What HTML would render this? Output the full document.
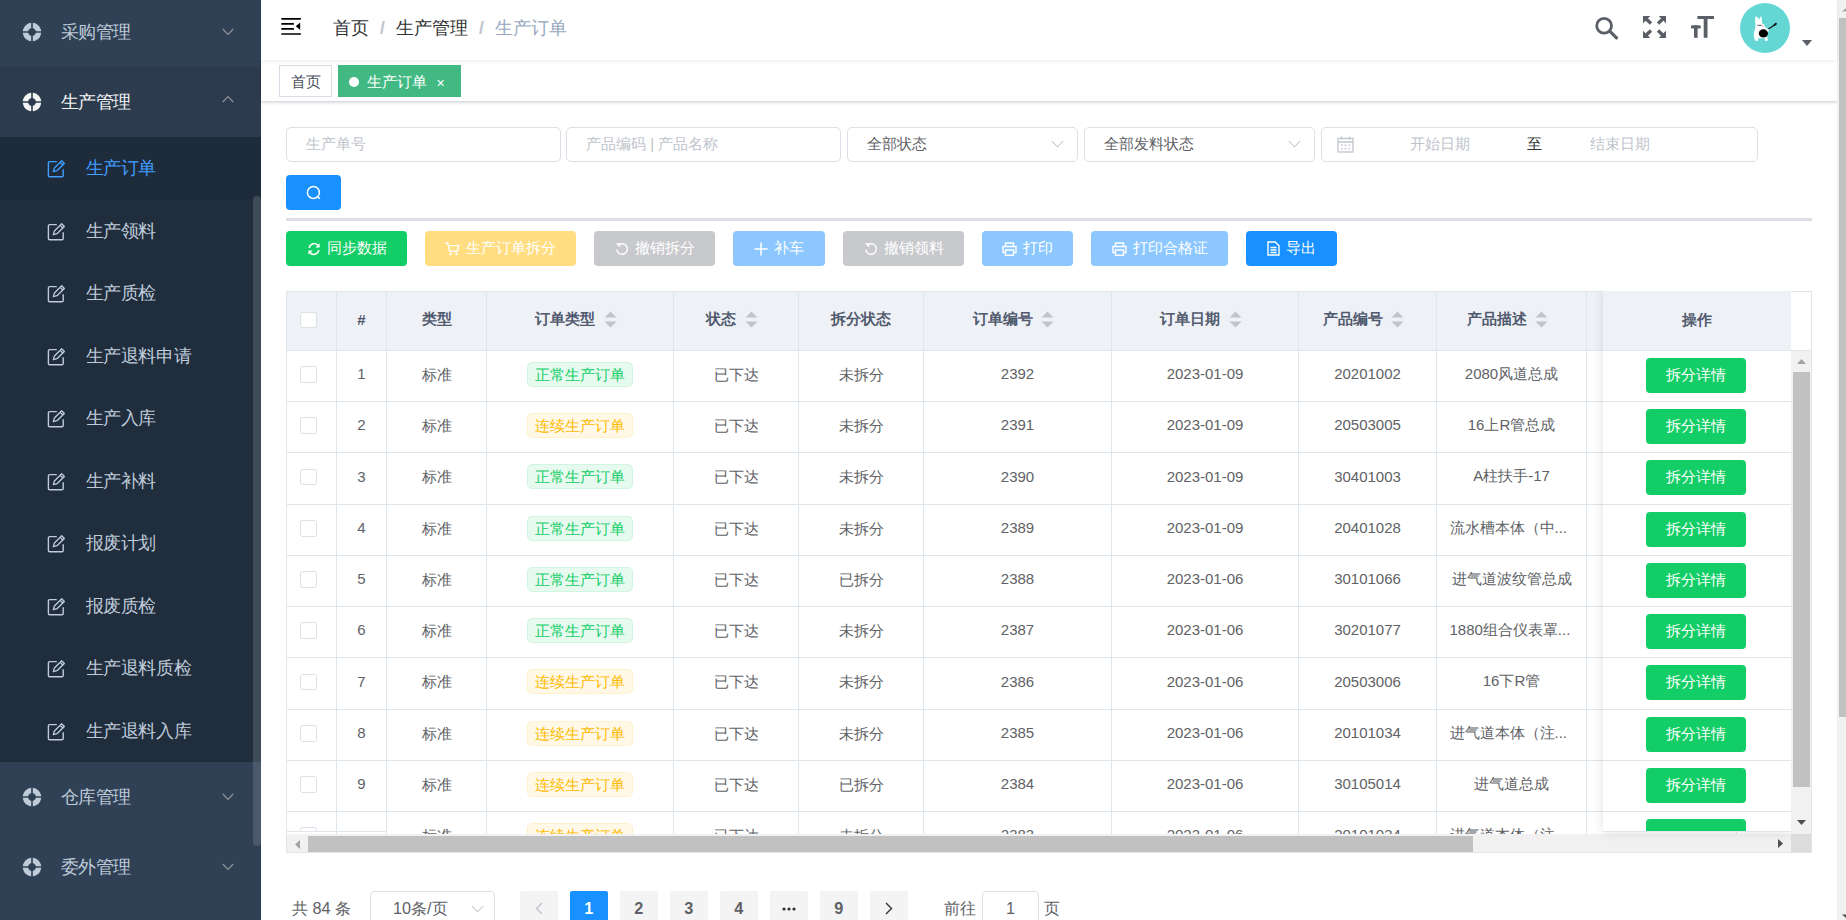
<!DOCTYPE html><html><head><meta charset="utf-8"><style>*{box-sizing:border-box;margin:0;padding:0}
html,body{width:1846px;height:920px;overflow:hidden;background:#fff;font-family:"Liberation Sans",sans-serif;position:relative}
#side{position:absolute;left:0;top:0;width:261px;height:920px;background:#304156;overflow:hidden}
.mh{position:absolute;left:0;width:261px;height:70px;color:#bfcbd9;font-size:17.5px}
.mh.act{color:#f4f4f5}
.mh .ri{position:absolute;left:22px;top:25px}
.mh .mt{position:absolute;left:60.5px;top:0;line-height:70px;letter-spacing:-0.4px}
.mh .arr{position:absolute;left:222px;top:31px;color:#909399}
.mh.act .arr{top:28px}
.sub{position:absolute;left:0;width:261px;background:#1f2d3d}
.mi{position:absolute;left:0;width:261px;height:62.5px;color:#bfcbd9;font-size:17.5px}
.mi.on{color:#409eff}
.mi .ei{position:absolute;left:47px;top:23px}
.mi .mt{position:absolute;left:85.5px;top:0;line-height:62.5px;letter-spacing:-0.4px}
.sb-thumb{position:absolute;left:253px;top:196px;width:8px;height:650px;background:rgba(144,147,153,.3);border-radius:4px}
#nav{position:absolute;left:261px;top:0;width:1576px;height:60px;background:#fff;box-shadow:0 1px 4px rgba(0,21,41,.08);z-index:2}
.ham{position:absolute;left:20px;top:17px}
.bc{position:absolute;left:72px;top:0;line-height:56px;font-size:17.5px;white-space:nowrap}
.bc .b1{color:#303133}
.bc .b2{color:#97a8be}
.bc .sep{color:#c0c4cc;margin:0 11px;font-weight:bold}
.ic{position:absolute;z-index:3}
.avatar{position:absolute;left:1740px;top:3px;width:50px;height:50px;z-index:3}
.caret{position:absolute;left:1802px;top:40px;z-index:3}
#tags{position:absolute;left:261px;top:60px;width:1576px;height:42px;background:#fff;border-bottom:1px solid #d8dce5;box-shadow:0 1px 3px 0 rgba(0,0,0,.12),0 0 3px 0 rgba(0,0,0,.04)}
.tag{position:absolute;top:5px;height:32px;line-height:31.5px;font-size:15px;border:1px solid #d8dce5;color:#495060;padding:0 10px}
.t0{left:18px;width:53px;text-align:center;padding:0}
.t1{left:77px;width:123px;background:#42b983;border-color:#42b983;color:#fff;padding-left:28px}
.t1 .dot{position:absolute;left:10px;top:11px;width:10px;height:10px;border-radius:50%;background:#fff}
.t1 .x{position:absolute;left:97.5px;top:1.5px;font-size:14px}
.inp{position:absolute;top:127px;height:35px;border:1px solid #dcdfe6;border-radius:5px;font-size:15px;line-height:32px;padding-left:19px;white-space:nowrap}
.ph{color:#c0c4cc}
.val{color:#606266}
.chev{position:absolute;right:13.5px;top:11.5px}
.btn{position:absolute;border-radius:4px;color:#fff;font-size:15px;display:flex;align-items:center;justify-content:center}
.sbtn{left:286px;top:175px;width:55px;height:35px;background:#1890ff}
.divider{position:absolute;left:286px;top:218px;width:1526px;height:3px;background:#dcdfe6}
.abtn{top:231px;height:35px}
.abtn svg{margin-right:6px}
#tbl{position:absolute;left:0;top:0}
.thead{position:absolute;left:286px;width:1505px;background:#eef1f6;border-bottom:1px solid #dfe6ec}
.th{position:absolute;display:flex;align-items:center;justify-content:center;font-size:15px;font-weight:bold;color:#515a6e}
.th .sort{margin-left:8.5px;margin-right:8.5px;position:relative;top:-1.2px}
.th span{position:relative;top:-1.2px}
.td{position:absolute;display:flex;align-items:center;justify-content:center;font-size:15px;color:#606266;white-space:nowrap}
.td span{position:relative}
.kd span{top:-2.5px}.kc span{top:-1px}.km span{top:-2px}
.vl{position:absolute;width:1px;background:#dfe6ec}
.hl{position:absolute;left:286px;width:1505px;height:1px;background:#dfe6ec}
.cb{position:absolute;width:16.5px;height:16.5px;border:1px solid #dcdfe6;border-radius:2.5px;background:#fff}
.tag2{display:inline-block;height:25px;line-height:23px;padding:0 7px;border-radius:5px;border:1px solid;font-size:15px;position:relative;top:-2px}
.tag2.g{background:#e7faf0;border-color:#d0f5e0;color:#13ce66}
.tag2.o{background:#fff8e6;border-color:#fff1cc;color:#ffba00}
#pscroll{position:absolute;left:1837px;top:0;width:19px;height:920px;background:#f1f1f1;overflow:hidden}
.pthumb{position:absolute;left:2px;top:18px;width:15px;height:699px;background:#c1c1c1}
.clip{position:absolute;left:0;top:0;width:1846px;height:920px}
.fixr{position:absolute;left:1603px;top:291px;width:188px;height:541px;border-bottom:1px solid #dfe6ec;background:#fff;box-shadow:0 0 10px rgba(0,0,0,.12);overflow:hidden}
.fixr-h{position:absolute;left:0;top:0;width:188px;height:60px;background:#eef1f6;border-bottom:1px solid #dfe6ec;display:flex;align-items:center;justify-content:center;font-size:15px;font-weight:bold;color:#515a6e}
.fr-row{position:absolute;left:0;width:188px;border-bottom:1px solid #dfe6ec;display:flex;align-items:center;justify-content:center}
.gbtn{position:relative;left:-1px;top:-1px;width:100px;height:35px;border-radius:4px;background:#13ce66;color:#fff;font-size:15px;display:flex;align-items:center;justify-content:center}
.gutter-h{position:absolute;left:1790px;top:291px;width:22px;height:60px;background:#fff;border-bottom:1px solid #dfe6ec;border-left:1px solid #dfe6ec}
.vsb{position:absolute;left:1791px;top:350.5px;width:20px;height:483.5px;background:#f1f1f1}
.vsb .ua{position:absolute;left:5.5px;top:8px}
.vsb .da{position:absolute;left:5.5px;top:469px}
.vthumb{position:absolute;left:2px;top:21.5px;width:17px;height:415px;background:#c1c1c1}
.hsb{position:absolute;left:287px;top:834px;width:1504px;height:18px;background:#f1f1f1}
.hsb .la{position:absolute;left:8px;top:5.5px}
.hsb .ra{position:absolute;left:1491px;top:4.5px}
.hthumb{position:absolute;left:21px;top:2px;width:1165px;height:16px;background:#c1c1c1}
.corner{position:absolute;left:1791px;top:834px;width:20px;height:18px;background:#dcdcdc}
.ptot{position:absolute;left:292px;top:891px;line-height:35px;font-size:16.25px;color:#606266}
.psize{position:absolute;left:370px;top:891px;width:124.5px;height:35px;border:1px solid #dcdfe6;border-radius:4px;font-size:16.25px;line-height:33px;padding-left:22px;color:#606266}
.psize .chev{position:absolute;right:10px;top:13px}
.pb{position:absolute;top:891px;width:37.5px;height:35px;background:#f4f4f5;border-radius:2px;font-size:16.25px;font-weight:bold;color:#606266;display:flex;align-items:center;justify-content:center}
.pb.pact{background:#1890ff;color:#fff}
.pgo,.ppage{position:absolute;top:891px;line-height:35px;font-size:16.25px;color:#606266}
.pgo{left:943.5px}
.ppage{left:1043.5px}
.pinp{position:absolute;left:982px;top:891px;width:57px;height:35px;border:1px solid #dcdfe6;border-radius:4px;text-align:center;line-height:33px;font-size:16.25px;color:#606266}
.td.ell{justify-content:flex-start;padding-left:12.5px}
</style></head><body>
<div id="side"><div class="mh " style="top:-3px;background:#304156"><svg class="ri" width="20" height="20" viewBox="0 0 20 20"><path fill-rule="evenodd" d="M10 0.75a9.25 9.25 0 1 0 0.001 0zM10 6.1a3.9 3.9 0 1 1-0.001 0z" fill="currentColor"/><path d="M10 0v20M0 10h20" stroke="#304156" stroke-width="1.6"/></svg><span class="mt">采购管理</span><svg class="arr" width="12" height="8" viewBox="0 0 12 8"><path d="M0.8 1L6 6.4 11.2 1" fill="none" stroke="currentColor" stroke-width="1.2"/></svg></div><div class="mh act" style="top:67px;background:#2c3b4d"><svg class="ri" width="20" height="20" viewBox="0 0 20 20"><path fill-rule="evenodd" d="M10 0.75a9.25 9.25 0 1 0 0.001 0zM10 6.1a3.9 3.9 0 1 1-0.001 0z" fill="currentColor"/><path d="M10 0v20M0 10h20" stroke="#2c3b4d" stroke-width="1.6"/></svg><span class="mt">生产管理</span><svg class="arr" width="12" height="8" viewBox="0 0 12 8"><path d="M0.8 7L6 1.6 11.2 7" fill="none" stroke="currentColor" stroke-width="1.2"/></svg></div><div class="sub" style="top:137px;height:625px"></div><div class="mi on" style="top:137.0px;background:#1e2b3b"><svg class="ei" width="20" height="19" viewBox="0 0 20 19"><path d="M9.8 1.6H2.6a1.2 1.2 0 0 0-1.2 1.2V15.5a1.2 1.2 0 0 0 1.2 1.2H15a1.2 1.2 0 0 0 1.2-1.2V9.2" fill="none" stroke="currentColor" stroke-width="1.4"/><path d="M6.3 11.6l1.1-3.5 7.3-7.3 2.6 2.6-7.3 7.3z M13.2 2.3l2.6 2.6" fill="none" stroke="currentColor" stroke-width="1.35" stroke-linejoin="round"/></svg><span class="mt">生产订单</span></div><div class="mi" style="top:199.5px;"><svg class="ei" width="20" height="19" viewBox="0 0 20 19"><path d="M9.8 1.6H2.6a1.2 1.2 0 0 0-1.2 1.2V15.5a1.2 1.2 0 0 0 1.2 1.2H15a1.2 1.2 0 0 0 1.2-1.2V9.2" fill="none" stroke="currentColor" stroke-width="1.4"/><path d="M6.3 11.6l1.1-3.5 7.3-7.3 2.6 2.6-7.3 7.3z M13.2 2.3l2.6 2.6" fill="none" stroke="currentColor" stroke-width="1.35" stroke-linejoin="round"/></svg><span class="mt">生产领料</span></div><div class="mi" style="top:262.0px;"><svg class="ei" width="20" height="19" viewBox="0 0 20 19"><path d="M9.8 1.6H2.6a1.2 1.2 0 0 0-1.2 1.2V15.5a1.2 1.2 0 0 0 1.2 1.2H15a1.2 1.2 0 0 0 1.2-1.2V9.2" fill="none" stroke="currentColor" stroke-width="1.4"/><path d="M6.3 11.6l1.1-3.5 7.3-7.3 2.6 2.6-7.3 7.3z M13.2 2.3l2.6 2.6" fill="none" stroke="currentColor" stroke-width="1.35" stroke-linejoin="round"/></svg><span class="mt">生产质检</span></div><div class="mi" style="top:324.5px;"><svg class="ei" width="20" height="19" viewBox="0 0 20 19"><path d="M9.8 1.6H2.6a1.2 1.2 0 0 0-1.2 1.2V15.5a1.2 1.2 0 0 0 1.2 1.2H15a1.2 1.2 0 0 0 1.2-1.2V9.2" fill="none" stroke="currentColor" stroke-width="1.4"/><path d="M6.3 11.6l1.1-3.5 7.3-7.3 2.6 2.6-7.3 7.3z M13.2 2.3l2.6 2.6" fill="none" stroke="currentColor" stroke-width="1.35" stroke-linejoin="round"/></svg><span class="mt">生产退料申请</span></div><div class="mi" style="top:387.0px;"><svg class="ei" width="20" height="19" viewBox="0 0 20 19"><path d="M9.8 1.6H2.6a1.2 1.2 0 0 0-1.2 1.2V15.5a1.2 1.2 0 0 0 1.2 1.2H15a1.2 1.2 0 0 0 1.2-1.2V9.2" fill="none" stroke="currentColor" stroke-width="1.4"/><path d="M6.3 11.6l1.1-3.5 7.3-7.3 2.6 2.6-7.3 7.3z M13.2 2.3l2.6 2.6" fill="none" stroke="currentColor" stroke-width="1.35" stroke-linejoin="round"/></svg><span class="mt">生产入库</span></div><div class="mi" style="top:449.5px;"><svg class="ei" width="20" height="19" viewBox="0 0 20 19"><path d="M9.8 1.6H2.6a1.2 1.2 0 0 0-1.2 1.2V15.5a1.2 1.2 0 0 0 1.2 1.2H15a1.2 1.2 0 0 0 1.2-1.2V9.2" fill="none" stroke="currentColor" stroke-width="1.4"/><path d="M6.3 11.6l1.1-3.5 7.3-7.3 2.6 2.6-7.3 7.3z M13.2 2.3l2.6 2.6" fill="none" stroke="currentColor" stroke-width="1.35" stroke-linejoin="round"/></svg><span class="mt">生产补料</span></div><div class="mi" style="top:512.0px;"><svg class="ei" width="20" height="19" viewBox="0 0 20 19"><path d="M9.8 1.6H2.6a1.2 1.2 0 0 0-1.2 1.2V15.5a1.2 1.2 0 0 0 1.2 1.2H15a1.2 1.2 0 0 0 1.2-1.2V9.2" fill="none" stroke="currentColor" stroke-width="1.4"/><path d="M6.3 11.6l1.1-3.5 7.3-7.3 2.6 2.6-7.3 7.3z M13.2 2.3l2.6 2.6" fill="none" stroke="currentColor" stroke-width="1.35" stroke-linejoin="round"/></svg><span class="mt">报废计划</span></div><div class="mi" style="top:574.5px;"><svg class="ei" width="20" height="19" viewBox="0 0 20 19"><path d="M9.8 1.6H2.6a1.2 1.2 0 0 0-1.2 1.2V15.5a1.2 1.2 0 0 0 1.2 1.2H15a1.2 1.2 0 0 0 1.2-1.2V9.2" fill="none" stroke="currentColor" stroke-width="1.4"/><path d="M6.3 11.6l1.1-3.5 7.3-7.3 2.6 2.6-7.3 7.3z M13.2 2.3l2.6 2.6" fill="none" stroke="currentColor" stroke-width="1.35" stroke-linejoin="round"/></svg><span class="mt">报废质检</span></div><div class="mi" style="top:637.0px;"><svg class="ei" width="20" height="19" viewBox="0 0 20 19"><path d="M9.8 1.6H2.6a1.2 1.2 0 0 0-1.2 1.2V15.5a1.2 1.2 0 0 0 1.2 1.2H15a1.2 1.2 0 0 0 1.2-1.2V9.2" fill="none" stroke="currentColor" stroke-width="1.4"/><path d="M6.3 11.6l1.1-3.5 7.3-7.3 2.6 2.6-7.3 7.3z M13.2 2.3l2.6 2.6" fill="none" stroke="currentColor" stroke-width="1.35" stroke-linejoin="round"/></svg><span class="mt">生产退料质检</span></div><div class="mi" style="top:699.5px;"><svg class="ei" width="20" height="19" viewBox="0 0 20 19"><path d="M9.8 1.6H2.6a1.2 1.2 0 0 0-1.2 1.2V15.5a1.2 1.2 0 0 0 1.2 1.2H15a1.2 1.2 0 0 0 1.2-1.2V9.2" fill="none" stroke="currentColor" stroke-width="1.4"/><path d="M6.3 11.6l1.1-3.5 7.3-7.3 2.6 2.6-7.3 7.3z M13.2 2.3l2.6 2.6" fill="none" stroke="currentColor" stroke-width="1.35" stroke-linejoin="round"/></svg><span class="mt">生产退料入库</span></div><div class="mh " style="top:762px;background:#304156"><svg class="ri" width="20" height="20" viewBox="0 0 20 20"><path fill-rule="evenodd" d="M10 0.75a9.25 9.25 0 1 0 0.001 0zM10 6.1a3.9 3.9 0 1 1-0.001 0z" fill="currentColor"/><path d="M10 0v20M0 10h20" stroke="#304156" stroke-width="1.6"/></svg><span class="mt">仓库管理</span><svg class="arr" width="12" height="8" viewBox="0 0 12 8"><path d="M0.8 1L6 6.4 11.2 1" fill="none" stroke="currentColor" stroke-width="1.2"/></svg></div><div class="mh " style="top:832px;background:#304156"><svg class="ri" width="20" height="20" viewBox="0 0 20 20"><path fill-rule="evenodd" d="M10 0.75a9.25 9.25 0 1 0 0.001 0zM10 6.1a3.9 3.9 0 1 1-0.001 0z" fill="currentColor"/><path d="M10 0v20M0 10h20" stroke="#304156" stroke-width="1.6"/></svg><span class="mt">委外管理</span><svg class="arr" width="12" height="8" viewBox="0 0 12 8"><path d="M0.8 1L6 6.4 11.2 1" fill="none" stroke="currentColor" stroke-width="1.2"/></svg></div><div class="sb-thumb"></div></div>
<div id="nav"><svg class="ham" width="22" height="19" viewBox="0 0 22 19"><path d="M1 1.8h18.2M1 6.9h11.2M1 11.9h11.2M1 17h18.2" stroke="#000" stroke-width="1.7" stroke-linecap="round"/><path d="M19.2 5.6v7.4l-4.4-3.7z" fill="#000"/></svg><div class="bc"><span class="b1">首页</span><span class="sep">/</span><span class="b1">生产管理</span><span class="sep">/</span><span class="b2">生产订单</span></div></div><svg class="ic" style="left:1595px;top:16px" width="24" height="24" viewBox="0 0 24 24"><circle cx="9.1" cy="9.8" r="7.4" fill="none" stroke="#5a5e66" stroke-width="2.8"/><path d="M15 15.4l6.5 6.4" stroke="#5a5e66" stroke-width="3.2" stroke-linecap="round"/></svg><svg class="ic" style="left:1643px;top:16px" width="23" height="22" viewBox="0 0 23 22"><g fill="#5a5e66"><path d="M0 0h7.3L0 7.2z M23 0h-7.3L23 7.2z M0 22h7.3L0 14.8z M23 22h-7.3L23 14.8z"/></g><g stroke="#5a5e66" stroke-width="3.4"><path d="M2.2 2.1L8 7.4 M20.8 2.1L15 7.4 M2.2 19.9L8 14.6 M20.8 19.9L15 14.6"/></g></svg><svg class="ic" style="left:1690px;top:16px" width="25" height="23" viewBox="0 0 25 23"><g fill="#5a5e66"><rect x="7.4" y="0" width="16.6" height="3" rx="0.3"/><rect x="13.7" y="0" width="3.8" height="21.8"/><rect x="1" y="9.4" width="9.7" height="3"/><rect x="4" y="9.4" width="3.6" height="12.4"/></g></svg><div class="avatar"><svg width="50" height="50" viewBox="0 0 50 50"><circle cx="25" cy="25" r="25" fill="#64d7d5"/>
<path d="M15.6 13.4C15 16 14.9 19 15.5 21L15.2 25.5C14 28 13.6 31 13.9 33.5L14.9 37.6 18 37.9 18.3 35.2 24.6 35.2 25.1 37.9 28 37.6 27 33C28.2 30.5 28.6 28 28.2 26.3L25 24C25 22.3 24 21 22.2 20.6C21.8 18 22 15 21.2 13.2 20.2 13.6 19.6 15 19.3 17 18.6 15 17.4 13.6 15.6 13.4Z" fill="#fff"/>
<path d="M17.6 22.3h4" stroke="#222" stroke-width="0.8"/><circle cx="23" cy="23" r="0.9" fill="#f4b6c2"/>
<ellipse cx="23.4" cy="30.4" rx="4.6" ry="4.2" fill="#000"/>
<path d="M25.5 28L35.6 21.2" stroke="#111" stroke-width="1.2"/><path d="M34 22.3l2.6-2" stroke="#111" stroke-width="2"/>
<circle cx="27.6" cy="27" r="1.3" fill="#fff"/></svg></div>
<svg class="caret" width="10" height="6" viewBox="0 0 10 6"><path d="M0 0h10L5 6z" fill="#5a5e66"/></svg><div id="tags"><div class="tag t0">首页</div><div class="tag t1"><span class="dot"></span>生产订单<span class="x">×</span></div></div>
<div class="inp" style="left:286px;width:275px"><span class="ph">生产单号</span></div><div class="inp" style="left:566px;width:275px"><span class="ph">产品编码 | 产品名称</span></div><div class="inp" style="left:847px;width:231px"><span class="val">全部状态</span><svg class="chev" width="13" height="8" viewBox="0 0 13 8"><path d="M0.8 1L6.5 6.8 12.2 1" fill="none" stroke="#c0c4cc" stroke-width="1.05"/></svg></div><div class="inp" style="left:1084px;width:231px"><span class="val">全部发料状态</span><svg class="chev" width="13" height="8" viewBox="0 0 13 8"><path d="M0.8 1L6.5 6.8 12.2 1" fill="none" stroke="#c0c4cc" stroke-width="1.05"/></svg></div><div class="inp" style="left:1321px;width:437px"><svg style="position:absolute;left:15px;top:8px" width="17" height="17" viewBox="0 0 17 17"><g fill="none" stroke="#c0c4cc" stroke-width="1.3"><rect x="1" y="2.5" width="15" height="13.5"/><path d="M1 6h15M4.5 0.5v3M12.5 0.5v3"/></g><g fill="#c0c4cc"><rect x="4" y="8.5" width="1.6" height="1.4"/><rect x="7.7" y="8.5" width="1.6" height="1.4"/><rect x="11.4" y="8.5" width="1.6" height="1.4"/><rect x="4" y="12" width="1.6" height="1.4"/><rect x="7.7" y="12" width="1.6" height="1.4"/><rect x="11.4" y="12" width="1.6" height="1.4"/></g></svg><span class="ph" style="position:absolute;left:88px">开始日期</span><span style="position:absolute;left:205px;color:#303133">至</span><span class="ph" style="position:absolute;left:268px">结束日期</span></div><div class="btn sbtn"><svg width="16" height="16" viewBox="0 0 16 16"><circle cx="7.4" cy="7.4" r="6" fill="none" stroke="#fff" stroke-width="1.5"/><path d="M11.8 11.8l2 2" stroke="#fff" stroke-width="1.5"/></svg></div><div class="divider"></div>
<div class="btn abtn" style="left:286px;width:121px;background:#13ce66"><svg width="14" height="14" viewBox="0 0 14 14"><g fill="none" stroke="#fff" stroke-width="1.5"><path d="M2.2 6A5 5 0 0 1 11.4 4"/><path d="M11.8 8A5 5 0 0 1 2.6 10"/></g><path d="M12.6 1.2v4.2H8.4z M1.4 12.8V8.6h4.2z" fill="#fff"/></svg><span>同步数据</span></div><div class="btn abtn" style="left:425px;width:151px;background:#ffdd80"><svg width="15" height="14" viewBox="0 0 15 14"><g fill="none" stroke="#fff" stroke-width="1.4"><path d="M0.5 1h2.2l2 8.2h7.6l1.6-5.6H3.6"/></g><circle cx="5.6" cy="12" r="1.2" fill="#fff"/><circle cx="11.4" cy="12" r="1.2" fill="#fff"/></svg><span>生产订单拆分</span></div><div class="btn abtn" style="left:594px;width:121px;background:#c8c9cc"><svg width="14" height="14" viewBox="0 0 14 14"><path d="M3.2 3.4A5.3 5.3 0 1 1 1.8 7.6" fill="none" stroke="#fff" stroke-width="1.4"/><path d="M0.8 1.2h4.4v4.2z" fill="#fff"/></svg><span>撤销拆分</span></div><div class="btn abtn" style="left:733px;width:92px;background:#8cc8ff"><svg width="14" height="14" viewBox="0 0 14 14"><path d="M7 0.5v13M0.5 7h13" stroke="#fff" stroke-width="1.5"/></svg><span>补车</span></div><div class="btn abtn" style="left:843px;width:121px;background:#c8c9cc"><svg width="14" height="14" viewBox="0 0 14 14"><path d="M3.2 3.4A5.3 5.3 0 1 1 1.8 7.6" fill="none" stroke="#fff" stroke-width="1.4"/><path d="M0.8 1.2h4.4v4.2z" fill="#fff"/></svg><span>撤销领料</span></div><div class="btn abtn" style="left:982px;width:91px;background:#8cc8ff"><svg width="15" height="14" viewBox="0 0 15 14"><g fill="none" stroke="#fff" stroke-width="1.4"><path d="M3.5 4.5V1h8v3.5"/><path d="M3.5 10.5H1V4.5h13v6h-2.5"/><path d="M3.5 8h8v5.2h-8z"/></g></svg><span>打印</span></div><div class="btn abtn" style="left:1091px;width:137px;background:#8cc8ff"><svg width="15" height="14" viewBox="0 0 15 14"><g fill="none" stroke="#fff" stroke-width="1.4"><path d="M3.5 4.5V1h8v3.5"/><path d="M3.5 10.5H1V4.5h13v6h-2.5"/><path d="M3.5 8h8v5.2h-8z"/></g></svg><span>打印合格证</span></div><div class="btn abtn" style="left:1246px;width:91px;background:#1890ff"><svg width="13" height="15" viewBox="0 0 13 15"><g fill="none" stroke="#fff" stroke-width="1.4"><path d="M1 1h7.2l3.8 3.8V14H1z"/><path d="M3.5 6.5h6M3.5 9h6M3.5 11.5h6"/></g></svg><span>导出</span></div>
<div class="clip" style="clip-path:inset(291px 56px 569px 286px)"><div class="thead" style="top:291px;height:60px"></div><div class="cb" style="left:300.25px;top:311.5px"></div><div class="vl" style="left:336px;top:291px;height:60px"></div><div class="th" style="left:337px;width:49px;top:291px;height:59px"><span>#</span></div><div class="vl" style="left:386px;top:291px;height:60px"></div><div class="th" style="left:387px;width:99px;top:291px;height:59px"><span>类型</span></div><div class="vl" style="left:486px;top:291px;height:60px"></div><div class="th" style="left:487px;width:186px;top:291px;height:59px"><span>订单类型</span><svg class="sort" width="13" height="17" viewBox="0 0 13 17"><path d="M6.5 0.5L12.5 6.5H0.5z M6.5 16.5L12.5 10.5H0.5z" fill="#c0c4cc"/></svg></div><div class="vl" style="left:673px;top:291px;height:60px"></div><div class="th" style="left:674px;width:124px;top:291px;height:59px"><span>状态</span><svg class="sort" width="13" height="17" viewBox="0 0 13 17"><path d="M6.5 0.5L12.5 6.5H0.5z M6.5 16.5L12.5 10.5H0.5z" fill="#c0c4cc"/></svg></div><div class="vl" style="left:798px;top:291px;height:60px"></div><div class="th" style="left:799px;width:124px;top:291px;height:59px"><span>拆分状态</span></div><div class="vl" style="left:923px;top:291px;height:60px"></div><div class="th" style="left:924px;width:187px;top:291px;height:59px"><span>订单编号</span><svg class="sort" width="13" height="17" viewBox="0 0 13 17"><path d="M6.5 0.5L12.5 6.5H0.5z M6.5 16.5L12.5 10.5H0.5z" fill="#c0c4cc"/></svg></div><div class="vl" style="left:1111px;top:291px;height:60px"></div><div class="th" style="left:1112px;width:186px;top:291px;height:59px"><span>订单日期</span><svg class="sort" width="13" height="17" viewBox="0 0 13 17"><path d="M6.5 0.5L12.5 6.5H0.5z M6.5 16.5L12.5 10.5H0.5z" fill="#c0c4cc"/></svg></div><div class="vl" style="left:1298px;top:291px;height:60px"></div><div class="th" style="left:1299px;width:137px;top:291px;height:59px"><span>产品编号</span><svg class="sort" width="13" height="17" viewBox="0 0 13 17"><path d="M6.5 0.5L12.5 6.5H0.5z M6.5 16.5L12.5 10.5H0.5z" fill="#c0c4cc"/></svg></div><div class="vl" style="left:1436px;top:291px;height:60px"></div><div class="th" style="left:1437px;width:149px;top:291px;height:59px"><span>产品描述</span><svg class="sort" width="13" height="17" viewBox="0 0 13 17"><path d="M6.5 0.5L12.5 6.5H0.5z M6.5 16.5L12.5 10.5H0.5z" fill="#c0c4cc"/></svg></div><div class="vl" style="left:1586px;top:291px;height:60px"></div><div class="vl" style="left:1736px;top:291px;height:60px"></div></div><div class="clip" style="clip-path:inset(351px 56px 86px 286px)"><div class="vl" style="left:336px;top:350px;height:484px"></div><div class="vl" style="left:386px;top:350px;height:484px"></div><div class="vl" style="left:486px;top:350px;height:484px"></div><div class="vl" style="left:673px;top:350px;height:484px"></div><div class="vl" style="left:798px;top:350px;height:484px"></div><div class="vl" style="left:923px;top:350px;height:484px"></div><div class="vl" style="left:1111px;top:350px;height:484px"></div><div class="vl" style="left:1298px;top:350px;height:484px"></div><div class="vl" style="left:1436px;top:350px;height:484px"></div><div class="vl" style="left:1586px;top:350px;height:484px"></div><div class="vl" style="left:1736px;top:350px;height:484px"></div><div class="hl" style="top:401px"></div><div class="td kc" style="left:387px;width:99px;top:351px;height:50px"><span>标准</span></div><div class="td kt" style="left:487px;width:186px;top:351px;height:50px"><span class="tag2 g">正常生产订单</span></div><div class="td kc" style="left:674px;width:124px;top:351px;height:50px"><span>已下达</span></div><div class="td kc" style="left:799px;width:124px;top:351px;height:50px"><span>未拆分</span></div><div class="td kd" style="left:924px;width:187px;top:351px;height:50px"><span>2392</span></div><div class="td kd" style="left:1112px;width:186px;top:351px;height:50px"><span>2023-01-09</span></div><div class="td kd" style="left:1299px;width:137px;top:351px;height:50px"><span>20201002</span></div><div class="td km" style="left:1437px;width:149px;top:351px;height:50px"><span>2080风道总成</span></div><div class="hl" style="top:452px"></div><div class="td kc" style="left:387px;width:99px;top:402px;height:50px"><span>标准</span></div><div class="td kt" style="left:487px;width:186px;top:402px;height:50px"><span class="tag2 o">连续生产订单</span></div><div class="td kc" style="left:674px;width:124px;top:402px;height:50px"><span>已下达</span></div><div class="td kc" style="left:799px;width:124px;top:402px;height:50px"><span>未拆分</span></div><div class="td kd" style="left:924px;width:187px;top:402px;height:50px"><span>2391</span></div><div class="td kd" style="left:1112px;width:186px;top:402px;height:50px"><span>2023-01-09</span></div><div class="td kd" style="left:1299px;width:137px;top:402px;height:50px"><span>20503005</span></div><div class="td km" style="left:1437px;width:149px;top:402px;height:50px"><span>16上R管总成</span></div><div class="hl" style="top:504px"></div><div class="td kc" style="left:387px;width:99px;top:453px;height:51px"><span>标准</span></div><div class="td kt" style="left:487px;width:186px;top:453px;height:51px"><span class="tag2 g">正常生产订单</span></div><div class="td kc" style="left:674px;width:124px;top:453px;height:51px"><span>已下达</span></div><div class="td kc" style="left:799px;width:124px;top:453px;height:51px"><span>未拆分</span></div><div class="td kd" style="left:924px;width:187px;top:453px;height:51px"><span>2390</span></div><div class="td kd" style="left:1112px;width:186px;top:453px;height:51px"><span>2023-01-09</span></div><div class="td kd" style="left:1299px;width:137px;top:453px;height:51px"><span>30401003</span></div><div class="td km" style="left:1437px;width:149px;top:453px;height:51px"><span>A柱扶手-17</span></div><div class="hl" style="top:555px"></div><div class="td kc" style="left:387px;width:99px;top:505px;height:50px"><span>标准</span></div><div class="td kt" style="left:487px;width:186px;top:505px;height:50px"><span class="tag2 g">正常生产订单</span></div><div class="td kc" style="left:674px;width:124px;top:505px;height:50px"><span>已下达</span></div><div class="td kc" style="left:799px;width:124px;top:505px;height:50px"><span>未拆分</span></div><div class="td kd" style="left:924px;width:187px;top:505px;height:50px"><span>2389</span></div><div class="td kd" style="left:1112px;width:186px;top:505px;height:50px"><span>2023-01-09</span></div><div class="td kd" style="left:1299px;width:137px;top:505px;height:50px"><span>20401028</span></div><div class="td km ell" style="left:1437px;width:149px;top:505px;height:50px"><span>流水槽本体（中...</span></div><div class="hl" style="top:606px"></div><div class="td kc" style="left:387px;width:99px;top:556px;height:50px"><span>标准</span></div><div class="td kt" style="left:487px;width:186px;top:556px;height:50px"><span class="tag2 g">正常生产订单</span></div><div class="td kc" style="left:674px;width:124px;top:556px;height:50px"><span>已下达</span></div><div class="td kc" style="left:799px;width:124px;top:556px;height:50px"><span>已拆分</span></div><div class="td kd" style="left:924px;width:187px;top:556px;height:50px"><span>2388</span></div><div class="td kd" style="left:1112px;width:186px;top:556px;height:50px"><span>2023-01-06</span></div><div class="td kd" style="left:1299px;width:137px;top:556px;height:50px"><span>30101066</span></div><div class="td km" style="left:1437px;width:149px;top:556px;height:50px"><span>进气道波纹管总成</span></div><div class="hl" style="top:657px"></div><div class="td kc" style="left:387px;width:99px;top:607px;height:50px"><span>标准</span></div><div class="td kt" style="left:487px;width:186px;top:607px;height:50px"><span class="tag2 g">正常生产订单</span></div><div class="td kc" style="left:674px;width:124px;top:607px;height:50px"><span>已下达</span></div><div class="td kc" style="left:799px;width:124px;top:607px;height:50px"><span>未拆分</span></div><div class="td kd" style="left:924px;width:187px;top:607px;height:50px"><span>2387</span></div><div class="td kd" style="left:1112px;width:186px;top:607px;height:50px"><span>2023-01-06</span></div><div class="td kd" style="left:1299px;width:137px;top:607px;height:50px"><span>30201077</span></div><div class="td km ell" style="left:1437px;width:149px;top:607px;height:50px"><span>1880组合仪表罩...</span></div><div class="hl" style="top:709px"></div><div class="td kc" style="left:387px;width:99px;top:658px;height:51px"><span>标准</span></div><div class="td kt" style="left:487px;width:186px;top:658px;height:51px"><span class="tag2 o">连续生产订单</span></div><div class="td kc" style="left:674px;width:124px;top:658px;height:51px"><span>已下达</span></div><div class="td kc" style="left:799px;width:124px;top:658px;height:51px"><span>未拆分</span></div><div class="td kd" style="left:924px;width:187px;top:658px;height:51px"><span>2386</span></div><div class="td kd" style="left:1112px;width:186px;top:658px;height:51px"><span>2023-01-06</span></div><div class="td kd" style="left:1299px;width:137px;top:658px;height:51px"><span>20503006</span></div><div class="td km" style="left:1437px;width:149px;top:658px;height:51px"><span>16下R管</span></div><div class="hl" style="top:760px"></div><div class="td kc" style="left:387px;width:99px;top:710px;height:50px"><span>标准</span></div><div class="td kt" style="left:487px;width:186px;top:710px;height:50px"><span class="tag2 o">连续生产订单</span></div><div class="td kc" style="left:674px;width:124px;top:710px;height:50px"><span>已下达</span></div><div class="td kc" style="left:799px;width:124px;top:710px;height:50px"><span>未拆分</span></div><div class="td kd" style="left:924px;width:187px;top:710px;height:50px"><span>2385</span></div><div class="td kd" style="left:1112px;width:186px;top:710px;height:50px"><span>2023-01-06</span></div><div class="td kd" style="left:1299px;width:137px;top:710px;height:50px"><span>20101034</span></div><div class="td km ell" style="left:1437px;width:149px;top:710px;height:50px"><span>进气道本体（注...</span></div><div class="hl" style="top:811px"></div><div class="td kc" style="left:387px;width:99px;top:761px;height:50px"><span>标准</span></div><div class="td kt" style="left:487px;width:186px;top:761px;height:50px"><span class="tag2 o">连续生产订单</span></div><div class="td kc" style="left:674px;width:124px;top:761px;height:50px"><span>已下达</span></div><div class="td kc" style="left:799px;width:124px;top:761px;height:50px"><span>已拆分</span></div><div class="td kd" style="left:924px;width:187px;top:761px;height:50px"><span>2384</span></div><div class="td kd" style="left:1112px;width:186px;top:761px;height:50px"><span>2023-01-06</span></div><div class="td kd" style="left:1299px;width:137px;top:761px;height:50px"><span>30105014</span></div><div class="td km" style="left:1437px;width:149px;top:761px;height:50px"><span>进气道总成</span></div><div class="hl" style="top:862px"></div><div class="td kc" style="left:387px;width:99px;top:812px;height:50px"><span>标准</span></div><div class="td kt" style="left:487px;width:186px;top:812px;height:50px"><span class="tag2 o">连续生产订单</span></div><div class="td kc" style="left:674px;width:124px;top:812px;height:50px"><span>已下达</span></div><div class="td kc" style="left:799px;width:124px;top:812px;height:50px"><span>未拆分</span></div><div class="td kd" style="left:924px;width:187px;top:812px;height:50px"><span>2383</span></div><div class="td kd" style="left:1112px;width:186px;top:812px;height:50px"><span>2023-01-06</span></div><div class="td kd" style="left:1299px;width:137px;top:812px;height:50px"><span>20101034</span></div><div class="td km ell" style="left:1437px;width:149px;top:812px;height:50px"><span>进气道本体（注...</span></div></div><div class="clip" style="clip-path:inset(351px 1459px 88px 286px)"><div style="position:absolute;left:286px;top:351px;width:101px;height:480px;background:#fff"></div><div class="hl" style="top:401px;width:101px"></div><div class="cb" style="left:300.25px;top:366.25px"></div><div class="td kd" style="left:337px;width:49px;top:351px;height:50px"><span>1</span></div><div class="hl" style="top:452px;width:101px"></div><div class="cb" style="left:300.25px;top:417.25px"></div><div class="td kd" style="left:337px;width:49px;top:402px;height:50px"><span>2</span></div><div class="hl" style="top:504px;width:101px"></div><div class="cb" style="left:300.25px;top:468.75px"></div><div class="td kd" style="left:337px;width:49px;top:453px;height:51px"><span>3</span></div><div class="hl" style="top:555px;width:101px"></div><div class="cb" style="left:300.25px;top:520.25px"></div><div class="td kd" style="left:337px;width:49px;top:505px;height:50px"><span>4</span></div><div class="hl" style="top:606px;width:101px"></div><div class="cb" style="left:300.25px;top:571.25px"></div><div class="td kd" style="left:337px;width:49px;top:556px;height:50px"><span>5</span></div><div class="hl" style="top:657px;width:101px"></div><div class="cb" style="left:300.25px;top:622.25px"></div><div class="td kd" style="left:337px;width:49px;top:607px;height:50px"><span>6</span></div><div class="hl" style="top:709px;width:101px"></div><div class="cb" style="left:300.25px;top:673.75px"></div><div class="td kd" style="left:337px;width:49px;top:658px;height:51px"><span>7</span></div><div class="hl" style="top:760px;width:101px"></div><div class="cb" style="left:300.25px;top:725.25px"></div><div class="td kd" style="left:337px;width:49px;top:710px;height:50px"><span>8</span></div><div class="hl" style="top:811px;width:101px"></div><div class="cb" style="left:300.25px;top:776.25px"></div><div class="td kd" style="left:337px;width:49px;top:761px;height:50px"><span>9</span></div><div class="hl" style="top:862px;width:101px"></div><div class="cb" style="left:300.25px;top:827.25px"></div><div class="vl" style="left:286px;top:350px;height:481px"></div><div class="vl" style="left:336px;top:350px;height:481px"></div><div class="vl" style="left:386px;top:350px;height:481px"></div><div class="hl" style="top:831px;width:101px"></div></div><div class="gutter-h"></div><div class="vl" style="left:286px;top:291px;height:562px"></div><div class="hl" style="left:286px;top:291px;width:1526px"></div><div class="vl" style="left:1811px;top:291px;height:562px"></div><div class="hl" style="left:286px;top:852px;width:1526px"></div><div class="hsb"><svg class="la" width="5" height="9" viewBox="0 0 5 9"><path d="M5 0v9L0 4.5z" fill="#a3a3a3"/></svg><div class="hthumb"></div><svg class="ra" width="5" height="9" viewBox="0 0 5 9"><path d="M0 0v9L5 4.5z" fill="#505050"/></svg></div><div class="clip" style="clip-path:inset(291px 55px 68px 286px)"><div class="fixr"><div class="fixr-h">操作</div><div class="fr-row" style="top:60px;height:51px"><div class="gbtn">拆分详情</div></div><div class="fr-row" style="top:111px;height:51px"><div class="gbtn">拆分详情</div></div><div class="fr-row" style="top:162px;height:52px"><div class="gbtn">拆分详情</div></div><div class="fr-row" style="top:214px;height:51px"><div class="gbtn">拆分详情</div></div><div class="fr-row" style="top:265px;height:51px"><div class="gbtn">拆分详情</div></div><div class="fr-row" style="top:316px;height:51px"><div class="gbtn">拆分详情</div></div><div class="fr-row" style="top:367px;height:52px"><div class="gbtn">拆分详情</div></div><div class="fr-row" style="top:419px;height:51px"><div class="gbtn">拆分详情</div></div><div class="fr-row" style="top:470px;height:51px"><div class="gbtn">拆分详情</div></div><div class="fr-row" style="top:521px;height:51px"><div class="gbtn"></div></div></div></div><div class="vsb"><svg class="ua" width="9" height="5" viewBox="0 0 9 5"><path d="M4.5 0L9 5H0z" fill="#a3a3a3"/></svg><div class="vthumb"></div><svg class="da" width="9" height="5" viewBox="0 0 9 5"><path d="M0 0h9L4.5 5z" fill="#505050"/></svg></div><div class="corner"></div>
<div class="ptot">共 84 条</div><div class="psize">10条/页<svg class="chev" width="13" height="8" viewBox="0 0 13 8"><path d="M0.8 1L6.5 6.8 12.2 1" fill="none" stroke="#c0c4cc" stroke-width="1.05"/></svg></div><div class="pb" style="left:520px"><svg width="8" height="13" viewBox="0 0 8 13"><path d="M7 1L1.5 6.5 7 12" fill="none" stroke="#c0c4cc" stroke-width="1.4"/></svg></div><div class="pb pact" style="left:570px">1</div><div class="pb" style="left:620px">2</div><div class="pb" style="left:670px">3</div><div class="pb" style="left:720px">4</div><div class="pb" style="left:770px"><svg width="14" height="4" viewBox="0 0 14 4"><circle cx="2" cy="2" r="1.6" fill="#303133"/><circle cx="7" cy="2" r="1.6" fill="#303133"/><circle cx="12" cy="2" r="1.6" fill="#303133"/></svg></div><div class="pb" style="left:820px">9</div><div class="pb" style="left:870px"><svg width="8" height="13" viewBox="0 0 8 13"><path d="M1 1l5.5 5.5L1 12" fill="none" stroke="#303133" stroke-width="1.4"/></svg></div><div class="pgo">前往</div><div class="pinp">1</div><div class="ppage">页</div>
<div id="pscroll"><svg style="position:absolute;left:5px;top:7px" width="9" height="5" viewBox="0 0 9 5"><path d="M4.5 0.5L9 4.5H0z" fill="#a3a3a3"/></svg><div class="pthumb"></div><svg style="position:absolute;left:5px;top:914px" width="9" height="5" viewBox="0 0 9 5"><path d="M0 0.5h9L4.5 4.5z" fill="#505050"/></svg></div>
</body></html>
